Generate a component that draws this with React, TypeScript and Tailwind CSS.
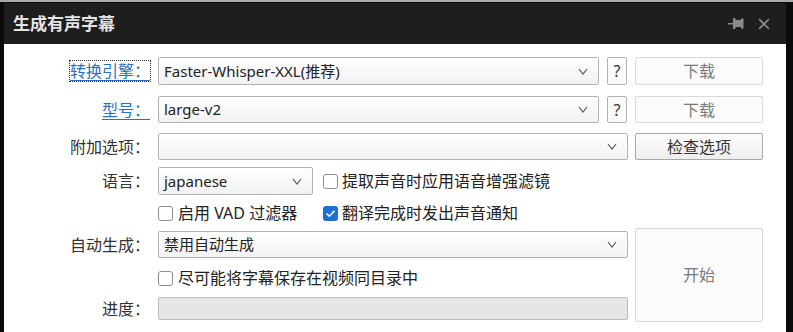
import React from "react";

const FONT = { fontFamily: '"Noto Sans", "Noto Sans CJK SC", sans-serif' };

function Chevron() {
  return (
    <svg width="10" height="7" viewBox="0 0 10 7" className="shrink-0">
      <polyline points="1,1 5,6 9,1" fill="none" stroke="#555" strokeWidth="1.2" />
    </svg>
  );
}

function Select({ w, text }: { w: string; text?: string }) {
  return (
    <div
      className={`${w} h-full flex items-center justify-between border border-[#b3b3b3] rounded-[2px] bg-gradient-to-b from-[#ffffff] to-[#f2f2f2] pl-[5px] pr-[10px] text-[15px] text-[#222] leading-none`}
    >
      <span>{text}</span>
      <Chevron />
    </div>
  );
}

function Check({ checked }: { checked?: boolean }) {
  return checked ? (
    <div className="w-[15px] h-[15px] rounded-[3px] bg-[#1f6fd0] flex items-center justify-center shrink-0">
      <svg width="11" height="9" viewBox="0 0 11 9">
        <polyline points="1.5,4.5 4.3,7.2 9.5,1.8" fill="none" stroke="#fff" strokeWidth="1.6" />
      </svg>
    </div>
  ) : (
    <div className="w-[15px] h-[15px] rounded-[3px] border border-[#8d8d8d] bg-white shrink-0" />
  );
}

function Label({ children, link, focus }: { children: React.ReactNode; link?: boolean; focus?: boolean }) {
  return (
    <div className="w-[146px] flex justify-end shrink-0">
      <span
        className={`text-[16px] leading-[20px] ${link ? "text-[#2a6fc0] underline underline-offset-[3px] decoration-[#2a6fc0]" : "text-[#333]"} ${focus ? "outline outline-1 outline-dotted outline-[#333]" : ""}`}
      >
        {children}
      </span>
    </div>
  );
}

function Help() {
  return (
    <div className="w-[20px] h-full border border-[#b3b3b3] rounded-[2px] bg-[#fafafa] flex items-center justify-center text-[16px] text-[#333] leading-none ml-[8px]">
      ?
    </div>
  );
}

export default function App() {
  return (
    <div className="w-[793px] h-[332px] overflow-hidden bg-[#0a0a0a] border-t-2 border-[#a9a9a9]" style={FONT}>
      <div className="h-[1px] bg-[#0a0a0a]" />
      <div className="ml-[4px] mr-[7px] h-[329px] flex flex-col">
        <div className="h-[41px] bg-[#1e1e1e] flex items-center justify-between pl-[9px] pr-[16px] shrink-0">
          <span className="text-[17px] font-bold text-[#e4e4e4] leading-none">生成有声字幕</span>
          <div className="flex items-center gap-[13px]">
            <svg width="17" height="13" viewBox="0 0 17 13">
              <rect x="0" y="6" width="6" height="1.5" fill="#8a8a8a" />
              <rect x="5" y="1" width="2.5" height="11" fill="#8a8a8a" />
              <rect x="7" y="3" width="7" height="7" fill="#8a8a8a" />
              <rect x="13" y="1.5" width="2.5" height="10" fill="#8a8a8a" />
            </svg>
            <svg width="12" height="12" viewBox="0 0 12 12">
              <path d="M1 1 L11 11 M11 1 L1 11" stroke="#8f8f8f" strokeWidth="1.6" />
            </svg>
          </div>
        </div>
        <div className="flex-1 bg-white flex flex-col pt-[13px]">
          <div className="h-[28px] flex items-center">
            <Label link focus>转换引擎：</Label>
            <div className="ml-[8px] h-full flex">
              <Select w="w-[441px]" text="Faster-Whisper-XXL(推荐)" />
              <Help />
            </div>
            <div className="ml-[8px] w-[128px] h-full border border-[#dadada] rounded-[2px] bg-[#fbfbfb] flex items-center justify-center text-[16px] text-[#7a7a7a]">
              下载
            </div>
          </div>
          <div className="h-[27px] mt-[11px] flex items-center">
            <Label link>型号：</Label>
            <div className="ml-[8px] h-full flex">
              <Select w="w-[441px]" text="large-v2" />
              <Help />
            </div>
            <div className="ml-[8px] w-[128px] h-full border border-[#dadada] rounded-[2px] bg-[#fbfbfb] flex items-center justify-center text-[16px] text-[#7a7a7a]">
              下载
            </div>
          </div>
          <div className="h-[27px] mt-[10px] flex items-center">
            <Label>附加选项：</Label>
            <div className="ml-[8px] h-full flex">
              <Select w="w-[470px]" />
            </div>
            <div className="ml-[7px] w-[128px] h-full border border-[#a8a8a8] rounded-[2px] bg-gradient-to-b from-[#fdfdfd] to-[#eeeeee] flex items-center justify-center text-[16px] text-[#333]">
              检查选项
            </div>
          </div>
          <div className="h-[28px] mt-[7px] flex items-center">
            <Label>语言：</Label>
            <div className="ml-[8px] h-full flex items-center">
              <Select w="w-[155px]" text="japanese" />
              <div className="ml-[10px] flex items-center gap-[4px]">
                <Check />
                <span className="text-[16px] text-[#222] leading-[20px]">提取声音时应用语音增强滤镜</span>
              </div>
            </div>
          </div>
          <div className="h-[20px] mt-[8px] flex items-center">
            <div className="w-[146px] shrink-0" />
            <div className="ml-[8px] flex items-center">
              <div className="w-[165px] flex items-center gap-[5px]">
                <Check />
                <span className="text-[16px] text-[#222] leading-[20px]">启用 VAD 过滤器</span>
              </div>
              <div className="flex items-center gap-[4px]">
                <Check checked />
                <span className="text-[16px] text-[#222] leading-[20px]">翻译完成时发出声音通知</span>
              </div>
            </div>
          </div>
          <div className="mt-[5px] flex">
            <div className="w-[624px] flex flex-col pt-[3px]">
              <div className="h-[27px] flex items-center">
                <Label>自动生成：</Label>
                <div className="ml-[8px] h-full flex">
                  <Select w="w-[470px]" text="禁用自动生成" />
                </div>
              </div>
              <div className="h-[20px] mt-[10px] flex items-center">
                <div className="w-[146px] shrink-0" />
                <div className="ml-[8px] flex items-center gap-[5px]">
                  <Check />
                  <span className="text-[16px] text-[#222] leading-[20px]">尽可能将字幕保存在视频同目录中</span>
                </div>
              </div>
              <div className="h-[23px] mt-[9px] flex items-center">
                <Label>进度：</Label>
                <div className="ml-[8px] w-[470px] h-full border border-[#bdbdbd] rounded-[2px] bg-[#e6e6e6]" />
              </div>
            </div>
            <div className="ml-[7px] w-[128px] h-[94px] border border-[#d8d8d8] rounded-[2px] bg-[#fbfbfb] flex items-center justify-center text-[16px] text-[#7a7a7a]">
              开始
            </div>
          </div>
        </div>
      </div>
    </div>
  );
}
